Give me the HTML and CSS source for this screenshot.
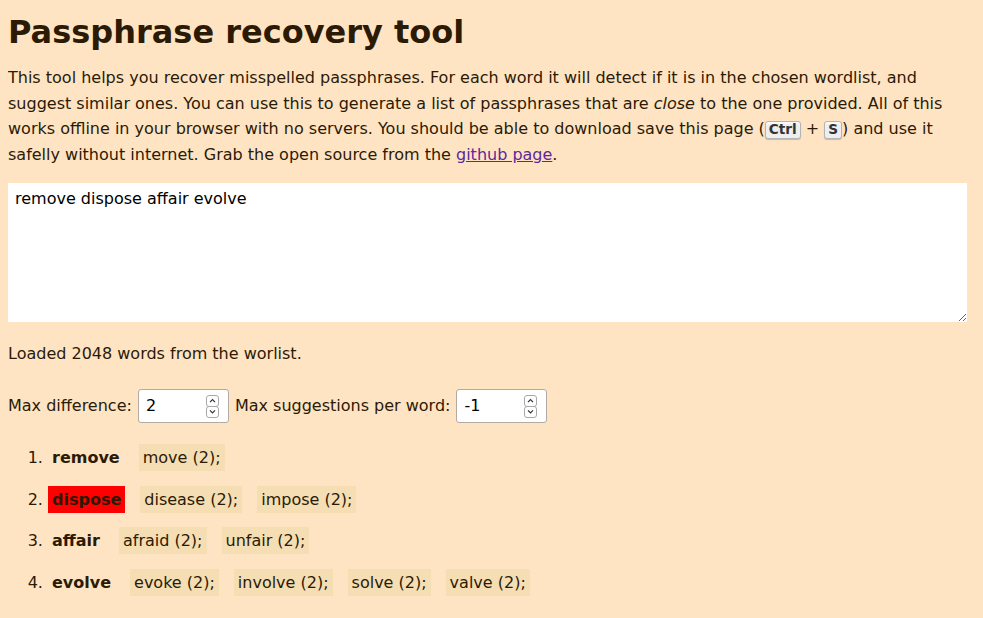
FILE: index.html
```html
<!DOCTYPE html>
<html lang="en">
<head>
<meta charset="utf-8">
<title>Passphrase recovery tool</title>
<link rel="stylesheet" href="styles.css">
</head>
<body>
<h1 class="title">Passphrase recovery tool</h1>
<p class="intro">This tool helps you recover misspelled passphrases. For each word it will detect if it is in the chosen wordlist, and suggest similar ones. You can use this to generate a list of passphrases that are <em>close</em> to the one provided. All of this works offline in your browser with no servers. You should be able to download save this page (<kbd class="key">Ctrl</kbd> + <kbd class="key">S</kbd>) and use it safelly without internet. Grab the open source from the <a class="link" href="#">github page</a>.</p>
<textarea class="phrase" spellcheck="false">remove dispose affair evolve</textarea>
<p class="status">Loaded 2048 words from the worlist.</p>
<div class="controls">
  <label class="ctl-label" for="diff">Max difference:</label>
  <span class="field">
    <input class="num" id="diff" type="number" value="2">
    <span class="spin" aria-hidden="true"><svg width="13" height="23" viewBox="0 0 13 23"><rect x="0.5" y="0.5" width="12" height="11" rx="2.5" fill="#fff" stroke="#a8a8a8"/><rect x="0.5" y="11.5" width="12" height="11" rx="2.5" fill="#fff" stroke="#a8a8a8"/><path d="M4 7.2 L6.5 4.7 L9 7.2" fill="none" stroke="#333" stroke-width="1.2"/><path d="M4 15.3 L6.5 17.8 L9 15.3" fill="none" stroke="#333" stroke-width="1.2"/></svg></span>
  </span>
  <label class="ctl-label" for="sugg">Max suggestions per word:</label>
  <span class="field">
    <input class="num" id="sugg" type="number" value="-1">
    <span class="spin" aria-hidden="true"><svg width="13" height="23" viewBox="0 0 13 23"><rect x="0.5" y="0.5" width="12" height="11" rx="2.5" fill="#fff" stroke="#a8a8a8"/><rect x="0.5" y="11.5" width="12" height="11" rx="2.5" fill="#fff" stroke="#a8a8a8"/><path d="M4 7.2 L6.5 4.7 L9 7.2" fill="none" stroke="#333" stroke-width="1.2"/><path d="M4 15.3 L6.5 17.8 L9 15.3" fill="none" stroke="#333" stroke-width="1.2"/></svg></span>
  </span>
</div>
<ol class="results">
  <li class="row"><span class="word">remove</span><span class="sugg">move (2);</span></li>
  <li class="row"><span class="word bad">dispose</span><span class="sugg">disease (2);</span><span class="sugg">impose (2);</span></li>
  <li class="row"><span class="word">affair</span><span class="sugg">afraid (2);</span><span class="sugg">unfair (2);</span></li>
  <li class="row"><span class="word">evolve</span><span class="sugg">evoke (2);</span><span class="sugg">involve (2);</span><span class="sugg">solve (2);</span><span class="sugg">valve (2);</span></li>
</ol>
</body>
</html>
```
FILE: styles.css
```css
html, body {
  background: #ffe4c4;
}
body {
  margin: 8px;
  font-family: "DejaVu Sans", sans-serif;
  font-size: 16px;
  line-height: 1.6;
  color: #2b1a04;
}
.title {
  font-size: 32px;
  font-weight: bold;
  line-height: normal;
  margin: 5px 0 14px;
}
.intro {
  margin: 0 0 16px;
}
.key {
  display: inline-block;
  font-family: "DejaVu Sans", sans-serif;
  font-size: 13.6px;
  font-weight: bold;
  line-height: 1;
  padding: 1px 3px;
  color: #333;
  background: #eee;
  border: 1px solid #b4b4b4;
  border-radius: 3px;
  box-shadow: 0 1px 1px rgba(0,0,0,0.2), inset 0 2px 0 0 rgba(255,255,255,0.7);
}
.link {
  color: #5b2a9a;
}
.phrase {
  display: block;
  box-sizing: border-box;
  width: calc(100% - 8px);
  height: 139px;
  margin: 0 0 19px;
  padding: 6px 7px;
  border: none;
  background: #fff;
  color: #000;
  font-family: "DejaVu Sans", sans-serif;
  font-size: 16px;
  line-height: normal;
  resize: both;
}
.status {
  margin: 0;
}
.controls {
  display: flex;
  align-items: center;
  gap: 6px;
  margin-top: 22px;
}
.field {
  position: relative;
  display: block;
  width: 91px;
  height: 34px;
}
.num {
  box-sizing: border-box;
  width: 91px;
  height: 34px;
  margin: 0;
  padding: 7px 26px 7px 7px;
  border: 1px solid #b2aba4;
  border-radius: 3px;
  background: #fff;
  color: #000;
  font-family: "DejaVu Sans", sans-serif;
  font-size: 16px;
  -moz-appearance: textfield;
  appearance: textfield;
}
.num::-webkit-inner-spin-button,
.num::-webkit-outer-spin-button {
  -webkit-appearance: none;
  margin: 0;
}
.spin {
  position: absolute;
  right: 10px;
  top: 6px;
  width: 13px;
  height: 23px;
  display: block;
}
.spin svg {
  display: block;
}
.results {
  margin: 22px 0 0;
  padding-left: 40px;
}
.row {
  margin-bottom: 16px;
}
.word {
  font-weight: bold;
  padding: 4px;
  margin-right: 15px;
}
.bad {
  background: #ff0000;
}
.sugg {
  background: #f5deb3;
  padding: 4px;
  margin-right: 15px;
}
```
